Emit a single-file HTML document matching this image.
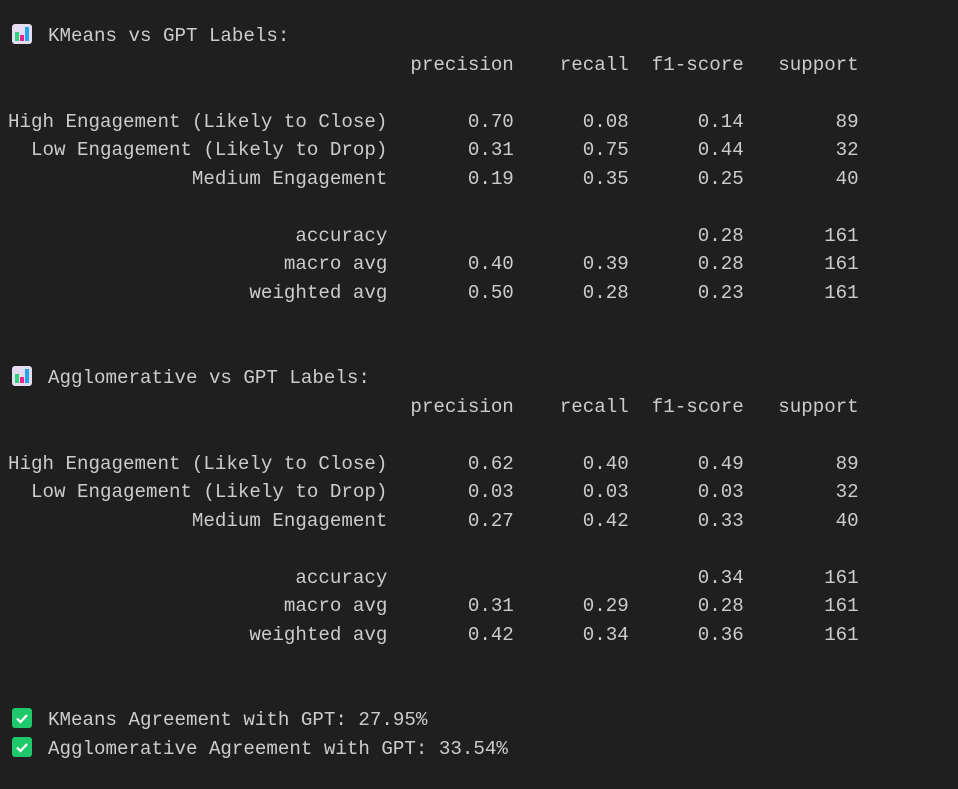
<!DOCTYPE html>
<html><head><style>
html,body{margin:0;background:#1f1f1f;width:958px;height:789px;overflow:hidden}
pre{position:absolute;left:8px;top:22px;margin:0;font-family:"Liberation Mono",monospace;font-size:19.17px;line-height:28.52px;color:#cccccc;white-space:pre}
.ic{display:inline-block;width:20px;height:20px;vertical-align:-3px;margin-left:4px;margin-right:16px;border-radius:3px;position:relative}
.chart{background:#e6dcef}
.chart i{position:absolute;bottom:3px;width:4px}
.ok{background:#1fc96b}
.ok svg{position:absolute;left:0;top:0}
</style></head><body>
<pre><span class="ic chart"><i style="left:3px;height:9px;background:#2fd37a"></i><i style="left:8px;height:6px;background:#f0218c"></i><i style="left:13px;height:14px;background:#22a7ef"></i></span>KMeans vs GPT Labels:
                                   precision    recall  f1-score   support

High Engagement (Likely to Close)       0.70      0.08      0.14        89
  Low Engagement (Likely to Drop)       0.31      0.75      0.44        32
                Medium Engagement       0.19      0.35      0.25        40

                         accuracy                           0.28       161
                        macro avg       0.40      0.39      0.28       161
                     weighted avg       0.50      0.28      0.23       161


<span class="ic chart"><i style="left:3px;height:9px;background:#2fd37a"></i><i style="left:8px;height:6px;background:#f0218c"></i><i style="left:13px;height:14px;background:#22a7ef"></i></span>Agglomerative vs GPT Labels:
                                   precision    recall  f1-score   support

High Engagement (Likely to Close)       0.62      0.40      0.49        89
  Low Engagement (Likely to Drop)       0.03      0.03      0.03        32
                Medium Engagement       0.27      0.42      0.33        40

                         accuracy                           0.34       161
                        macro avg       0.31      0.29      0.28       161
                     weighted avg       0.42      0.34      0.36       161


<span class="ic ok"><svg width="20" height="20"><path d="M5 10.5l3.5 3.5L15 7" stroke="#fff" stroke-width="2.2" fill="none"/></svg></span>KMeans Agreement with GPT: 27.95%
<span class="ic ok"><svg width="20" height="20"><path d="M5 10.5l3.5 3.5L15 7" stroke="#fff" stroke-width="2.2" fill="none"/></svg></span>Agglomerative Agreement with GPT: 33.54%</pre>
</body></html>
